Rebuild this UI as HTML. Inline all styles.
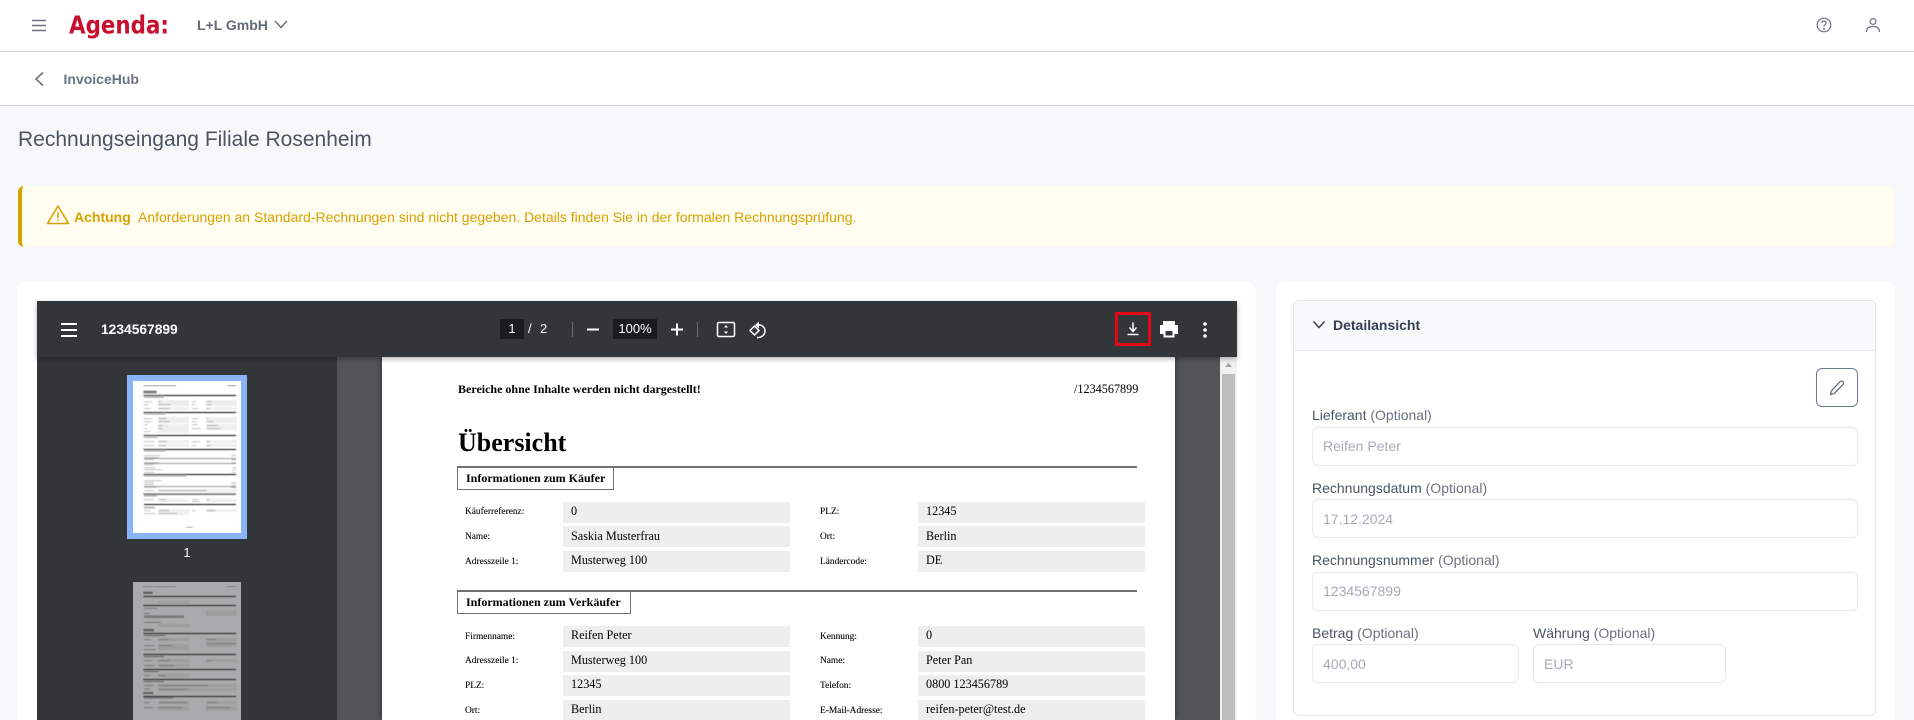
<!DOCTYPE html>
<html lang="de"><head><meta charset="utf-8"><title>InvoiceHub</title>
<style>
html,body{margin:0;padding:0;width:1914px;height:720px;overflow:hidden;background:#f7f8fa}
body{position:relative;font-family:"Liberation Sans",sans-serif}
.a{position:absolute;box-sizing:border-box}
.t{position:absolute;white-space:nowrap;line-height:20px;height:20px}
.s{font-family:"Liberation Serif",serif;color:#000;line-height:14px;height:14px}
.l{font-size:9.4px;margin-top:1px;-webkit-text-stroke:.1px #000}
.v{font-size:12.2px}
.f{position:absolute;background:#eee;width:227px}
.lab{font-size:14px;color:#4b5563}
.lab span{color:#6b7280}
.inp{position:absolute;border:1px solid #e5e7eb;border-radius:6px;background:#fff;box-sizing:border-box;height:39px}
.ph{font-size:14px;color:#a6abb3}
</style></head><body>

<!-- top bars -->
<div class="a" style="left:0;top:0;width:1914px;height:52px;background:#fff;border-bottom:1px solid #d4d6da"></div>
<div class="a" style="left:0;top:52px;width:1914px;height:54px;background:#fff;border-bottom:1px solid #d2d3da"></div>
<svg class="a" style="left:0;top:0" width="320" height="106" viewBox="0 0 320 106" fill="none">
<path d="M32 20.5H46M32 25.5H46M32 30.5H46" stroke="#6b7280" stroke-width="1.5"/>
<text x="69" y="33.500" font-family="DejaVu Sans" font-weight="700" font-size="24.500" fill="#c8102e" textLength="100" lengthAdjust="spacingAndGlyphs">Agenda:</text>
<path d="M275 21L281 27.5L287 21" stroke="#6b7280" stroke-width="1.5"/>
<path d="M43 72.5L36 79L43 85.500" stroke="#6b7280" stroke-width="1.6"/>
</svg>
<div class="t" style="left:197px;top:15px;font-size:14px;font-weight:700;color:#636b77">L+L GmbH</div>
<div class="t" style="left:63.500px;top:69px;font-size:14px;font-weight:700;color:#6b7280">InvoiceHub</div>
<svg class="a" style="left:1810px;top:12px" width="80" height="26" viewBox="0 0 80 26" fill="none" stroke="#6b7280" stroke-width="1.2">
<circle cx="14" cy="13" r="6.800"/>
<path d="M11.800 11C11.800 9.600 12.800 9 14 9C15.300 9 16.200 9.800 16.200 10.900C16.200 12.600 14 12.600 14 14.500"/>
<circle cx="14" cy="16.800" r=".5"/>
<circle cx="63" cy="9.500" r="2.900"/>
<path d="M56.500 20C56.500 16 59 14.500 63 14.500C67 14.500 69.500 16 69.500 20"/>
</svg>

<!-- title -->
<div class="t" style="left:18px;top:130px;font-size:21px;color:#4b5560">Rechnungseingang Filiale Rosenheim</div>

<!-- alert -->
<div class="a" style="left:18px;top:186px;width:1876px;height:61px;background:#fffdf0;border-left:4px solid #d6a100;border-radius:6px"></div>
<svg class="a" style="left:46px;top:204px" width="24" height="22" viewBox="0 0 24 22" fill="none" stroke="#d6a100" stroke-width="1.500">
<path d="M12 2L22.500 19.500H1.500Z" stroke-linejoin="round"/>
<path d="M12 8V14M12 15.500V17"/>
</svg>
<div class="t" style="left:74px;top:207px;font-size:14px;font-weight:700;color:#d6a100">Achtung</div>
<div class="t" style="left:138px;top:207px;font-size:14px;color:#d6a100">Anforderungen an Standard-Rechnungen sind nicht gegeben. Details finden Sie in der formalen Rechnungsprüfung.</div>

<!-- left card -->
<div class="a" style="left:18px;top:282px;width:1237px;height:438px;background:#fff;border-radius:8px 8px 0 0"></div>
<!-- viewer -->
<div class="a" style="left:37px;top:301px;width:1200px;height:419px;background:#525659;overflow:hidden"></div>
<div class="a" style="left:37px;top:357px;width:300px;height:363px;background:#323639"></div>
<!-- scrollbar -->
<div class="a" style="left:1220px;top:357px;width:17px;height:363px;background:#f1f1f1"></div>
<div class="a" style="left:1222px;top:374px;width:13px;height:346px;background:#bdbdbd"></div>
<svg class="a" style="left:1224px;top:362px" width="9" height="6"><path d="M1 5L4.500 1L8 5Z" fill="#a3a3a3"/></svg>

<!-- thumbnails -->
<svg class="a" style="left:0;top:280px" width="400" height="440" viewBox="0 0 1200 1320">
<defs><filter id="b" x="0" y="0" width="1" height="1"><feGaussianBlur stdDeviation="1.500"/></filter></defs>
<rect x="381" y="285" width="360" height="492" fill="#8ab4f8"/>
<rect x="399" y="303" width="324" height="456" fill="#fff"/>
<g filter="url(#b)">
<g fill="#8a8a8a">
<rect x="430" y="315" width="98" height="3"/><rect x="682" y="315" width="26" height="3"/>
<rect x="430" y="332" width="40" height="8" fill="#777"/>
<rect x="432" y="348" width="60" height="6" fill="#bbb"/>
<rect x="432" y="399" width="64" height="5" fill="#bbb"/>
<rect x="432" y="469" width="40" height="5" fill="#bbb"/>
<rect x="432" y="510" width="64" height="5" fill="#bbb"/>
<rect x="432" y="585" width="128" height="5" fill="#bbb"/>
<rect x="432" y="645" width="40" height="5" fill="#bbb"/>
<rect x="432" y="680" width="32" height="5" fill="#aaa"/>
</g>
<g fill="#eee">
<rect x="474" y="360" width="93" height="18"/><rect x="474" y="381" width="93" height="9"/>
<rect x="474" y="411" width="93" height="18"/><rect x="474" y="432" width="93" height="27"/>
<rect x="474" y="480" width="93" height="9"/><rect x="474" y="492" width="93" height="9"/>
<rect x="474" y="657" width="93" height="9"/><rect x="474" y="687" width="93" height="18"/>
<rect x="618" y="360" width="93" height="18"/><rect x="618" y="381" width="93" height="9"/>
<rect x="618" y="411" width="93" height="18"/><rect x="618" y="432" width="93" height="18"/>
<rect x="618" y="480" width="93" height="9"/><rect x="618" y="492" width="93" height="9"/>
<rect x="618" y="657" width="93" height="9"/><rect x="618" y="687" width="93" height="9"/>
<rect x="474" y="627" width="237" height="9"/>
</g>
<g fill="#a5a5a5">
<rect x="432" y="364" width="24" height="2"/><rect x="432" y="373" width="14" height="2"/><rect x="432" y="385" width="22" height="2"/>
<rect x="432" y="415" width="26" height="2"/><rect x="432" y="424" width="22" height="2"/><rect x="432" y="433" width="12" height="2"/><rect x="432" y="445" width="10" height="2"/><rect x="432" y="454" width="20" height="2"/>
<rect x="432" y="484" width="30" height="2"/><rect x="432" y="496" width="30" height="2"/>
<rect x="432" y="526" width="48" height="2"/><rect x="432" y="532" width="44" height="2"/><rect x="432" y="538" width="30" height="2"/>
<rect x="432" y="547" width="44" height="2"/><rect x="432" y="553" width="30" height="2"/>
<rect x="432" y="562" width="34" height="2"/><rect x="432" y="568" width="54" height="2"/><rect x="432" y="577" width="32" height="2"/>
<rect x="432" y="601" width="54" height="2"/><rect x="432" y="607" width="30" height="2"/><rect x="432" y="613" width="30" height="2"/><rect x="432" y="621" width="38" height="2"/>
<rect x="432" y="631" width="30" height="2"/><rect x="432" y="658" width="30" height="2"/><rect x="432" y="691" width="20" height="2"/><rect x="432" y="700" width="34" height="2"/>
<rect x="576" y="364" width="12" height="2"/><rect x="576" y="373" width="10" height="2"/><rect x="576" y="385" width="20" height="2"/>
<rect x="576" y="415" width="18" height="2"/><rect x="576" y="424" width="14" height="2"/><rect x="576" y="433" width="16" height="2"/><rect x="576" y="445" width="26" height="2"/>
<rect x="576" y="484" width="24" height="2"/><rect x="576" y="496" width="14" height="2"/><rect x="576" y="658" width="20" height="2"/><rect x="576" y="664" width="24" height="2"/><rect x="576" y="691" width="10" height="2"/>
<rect x="476" y="364" width="6" height="2" fill="#888"/><rect x="476" y="373" width="36" height="2" fill="#888"/><rect x="476" y="385" width="32" height="2" fill="#888"/>
<rect x="476" y="415" width="24" height="2" fill="#888"/><rect x="476" y="424" width="32" height="2" fill="#888"/><rect x="476" y="436" width="12" height="2" fill="#888"/><rect x="476" y="445" width="12" height="2" fill="#888"/>
<rect x="476" y="484" width="24" height="2" fill="#888"/><rect x="476" y="496" width="22" height="2" fill="#888"/><rect x="476" y="631" width="145" height="2" fill="#888"/>
<rect x="476" y="658" width="22" height="2" fill="#888"/><rect x="476" y="691" width="32" height="2" fill="#888"/><rect x="476" y="700" width="56" height="2" fill="#888"/>
<rect x="620" y="364" width="14" height="2" fill="#888"/><rect x="620" y="373" width="14" height="2" fill="#888"/><rect x="620" y="385" width="8" height="2" fill="#888"/>
<rect x="620" y="415" width="5" height="2" fill="#888"/><rect x="620" y="424" width="20" height="2" fill="#888"/><rect x="620" y="436" width="34" height="2" fill="#888"/><rect x="620" y="445" width="42" height="2" fill="#888"/>
<rect x="620" y="484" width="10" height="2" fill="#888"/><rect x="620" y="496" width="12" height="2" fill="#888"/><rect x="620" y="658" width="8" height="2" fill="#888"/><rect x="620" y="691" width="26" height="2" fill="#888"/>
<rect x="694" y="526" width="14" height="2"/><rect x="694" y="538" width="14" height="2" fill="#777"/><rect x="694" y="547" width="14" height="2"/>
<rect x="698" y="562" width="10" height="2"/><rect x="698" y="568" width="10" height="2"/><rect x="694" y="577" width="14" height="2"/>
<rect x="694" y="607" width="14" height="2"/><rect x="694" y="613" width="14" height="2"/><rect x="694" y="621" width="14" height="2" fill="#777"/>
<rect x="558" y="741" width="20" height="3"/>
</g>
<g fill="#000">
<rect x="430" y="345" width="278" height="3"/><rect x="430" y="396" width="278" height="3"/>
<rect x="430" y="465" width="278" height="3"/><rect x="430" y="507" width="278" height="3"/>
<rect x="430" y="582" width="278" height="3"/><rect x="432" y="672" width="276" height="3"/>
</g>
<g fill="#999">
<rect x="432" y="534" width="276" height="3"/><rect x="432" y="549" width="276" height="3"/><rect x="432" y="618" width="276" height="3"/>
</g>
<rect x="430" y="640" width="278" height="5" fill="#777"/>
</g>

<rect x="399" y="906" width="324" height="414" fill="#a9aaab"/>
<g filter="url(#b)">
<g fill="#1c1c1c">
<rect x="430" y="948" width="278" height="3"/><rect x="430" y="975" width="278" height="3"/>
<rect x="430" y="1059" width="278" height="3"/><rect x="430" y="1122" width="278" height="3"/>
<rect x="430" y="1167" width="278" height="3"/><rect x="430" y="1197" width="278" height="3"/><rect x="430" y="1248" width="278" height="3"/>
</g>
<g fill="#9c9d9e">
<rect x="474" y="963" width="93" height="9"/><rect x="618" y="990" width="93" height="18"/><rect x="474" y="1032" width="93" height="9"/>
<rect x="474" y="1074" width="93" height="9"/><rect x="474" y="1092" width="93" height="18"/><rect x="618" y="1074" width="93" height="9"/><rect x="618" y="1086" width="93" height="15"/>
<rect x="474" y="1137" width="93" height="9"/><rect x="474" y="1152" width="93" height="9"/><rect x="618" y="1137" width="93" height="9"/>
<rect x="474" y="1182" width="93" height="9"/><rect x="474" y="1212" width="237" height="9"/><rect x="474" y="1224" width="237" height="9"/>
<rect x="474" y="1263" width="93" height="9"/><rect x="474" y="1278" width="93" height="15"/><rect x="618" y="1263" width="93" height="9"/><rect x="618" y="1278" width="93" height="15"/>
</g>
<g fill="#5e5f60">
<rect x="430" y="918" width="98" height="2"/><rect x="682" y="918" width="26" height="2"/><rect x="430" y="935" width="28" height="7"/>
<rect x="432" y="1006" width="120" height="8" fill="#777"/><rect x="430" y="1047" width="32" height="7"/>
<rect x="432" y="984" width="40" height="2"/><rect x="432" y="999" width="18" height="2"/><rect x="432" y="1026" width="50" height="2"/>
<rect x="432" y="1065" width="64" height="3"/><rect x="432" y="1128" width="60" height="3"/><rect x="432" y="1173" width="44" height="3"/><rect x="432" y="1203" width="60" height="3"/><rect x="430" y="1236" width="30" height="6"/><rect x="432" y="1252" width="88" height="3"/>
<rect x="476" y="1078" width="30" height="2"/><rect x="476" y="1096" width="40" height="2"/><rect x="476" y="1141" width="32" height="2"/><rect x="476" y="1156" width="48" height="2"/><rect x="476" y="1186" width="20" height="2"/>
<rect x="476" y="1216" width="148" height="2"/><rect x="476" y="1227" width="86" height="2"/><rect x="476" y="1267" width="84" height="2"/><rect x="476" y="1282" width="70" height="2"/>
<rect x="620" y="1078" width="26" height="2"/><rect x="620" y="1090" width="86" height="2"/><rect x="620" y="1141" width="14" height="2"/><rect x="620" y="1267" width="30" height="2"/><rect x="620" y="1282" width="70" height="2"/>
<rect x="432" y="1078" width="22" height="2"/><rect x="432" y="1096" width="30" height="2"/><rect x="432" y="1108" width="34" height="2"/><rect x="432" y="1141" width="24" height="2"/><rect x="432" y="1156" width="30" height="2"/><rect x="432" y="1186" width="20" height="2"/><rect x="432" y="1216" width="30" height="2"/><rect x="432" y="1226" width="20" height="2"/><rect x="432" y="1267" width="16" height="2"/><rect x="432" y="1282" width="28" height="2"/>
</g>
</g>
</svg>
<div class="t" style="left:182px;top:543px;width:10px;text-align:center;font-size:13px;color:#fff">1</div>

<!-- pdf page -->
<div class="a" style="left:382px;top:340px;width:793px;height:380px;background:#fff;box-shadow:0 0 6px rgba(0,0,0,.45);overflow:hidden"></div>
<div class="t s" style="left:458px;top:382px;font-size:12px;font-weight:700">Bereiche ohne Inhalte werden nicht dargestellt!</div>
<div class="t s" style="left:1074px;top:382px;font-size:12.2px">/1234567899</div>
<div class="t" style="left:458px;top:428px;height:30px;line-height:30px;font-family:'Liberation Serif',serif;font-size:26px;font-weight:700;color:#000">Übersicht</div>

<div class="a" style="left:458px;top:466px;width:679px;height:2px;background:#707070"></div>
<div class="a" style="left:457px;top:466px;width:157px;height:24px;border:1px solid #707070;border-top-width:2px;background:#fff"></div>
<div class="t s" style="left:466px;top:471px;font-size:12px;font-weight:700">Informationen zum Käufer</div>
<div class="f" style="left:563px;top:502px;height:21px"></div><div class="f" style="left:563px;top:526px;height:21px"></div><div class="f" style="left:563px;top:551px;height:21px"></div>
<div class="f" style="left:918px;top:502px;height:21px"></div><div class="f" style="left:918px;top:526px;height:21px"></div><div class="f" style="left:918px;top:551px;height:21px"></div>
<div class="t s l" style="left:465px;top:504px">Käuferreferenz:</div><div class="t s l" style="left:465px;top:529px">Name:</div><div class="t s l" style="left:465px;top:554px">Adresszeile 1:</div>
<div class="t s l" style="left:820px;top:504px">PLZ:</div><div class="t s l" style="left:820px;top:529px">Ort:</div><div class="t s l" style="left:820px;top:554px">Ländercode:</div>
<div class="t s v" style="left:571px;top:504px">0</div><div class="t s v" style="left:571px;top:529px">Saskia Musterfrau</div><div class="t s v" style="left:571px;top:553px">Musterweg 100</div>
<div class="t s v" style="left:926px;top:504px">12345</div><div class="t s v" style="left:926px;top:529px">Berlin</div><div class="t s v" style="left:926px;top:553px">DE</div>

<div class="a" style="left:458px;top:590px;width:679px;height:2px;background:#707070"></div>
<div class="a" style="left:457px;top:590px;width:174px;height:24px;border:1px solid #707070;border-top-width:2px;background:#fff"></div>
<div class="t s" style="left:466px;top:595px;font-size:12px;font-weight:700">Informationen zum Verkäufer</div>
<div class="f" style="left:563px;top:626px;height:21px"></div><div class="f" style="left:563px;top:651px;height:21px"></div><div class="f" style="left:563px;top:675px;height:21px"></div><div class="f" style="left:563px;top:700px;height:20px"></div>
<div class="f" style="left:918px;top:626px;height:21px"></div><div class="f" style="left:918px;top:651px;height:21px"></div><div class="f" style="left:918px;top:675px;height:21px"></div><div class="f" style="left:918px;top:700px;height:20px"></div>
<div class="t s l" style="left:465px;top:629px">Firmenname:</div><div class="t s l" style="left:465px;top:653px">Adresszeile 1:</div><div class="t s l" style="left:465px;top:678px">PLZ:</div><div class="t s l" style="left:465px;top:703px">Ort:</div>
<div class="t s l" style="left:820px;top:629px">Kennung:</div><div class="t s l" style="left:820px;top:653px">Name:</div><div class="t s l" style="left:820px;top:678px">Telefon:</div><div class="t s l" style="left:820px;top:703px">E-Mail-Adresse:</div>
<div class="t s v" style="left:571px;top:628px">Reifen Peter</div><div class="t s v" style="left:571px;top:653px">Musterweg 100</div><div class="t s v" style="left:571px;top:677px">12345</div><div class="t s v" style="left:571px;top:702px">Berlin</div>
<div class="t s v" style="left:926px;top:628px">0</div><div class="t s v" style="left:926px;top:653px">Peter Pan</div><div class="t s v" style="left:926px;top:677px">0800 123456789</div><div class="t s v" style="left:926px;top:702px">reifen-peter@test.de</div>

<!-- toolbar -->
<div class="a" style="left:37px;top:301px;width:1200px;height:56px;background:#323639;box-shadow:0 2px 5px rgba(0,0,0,.3)"></div>
<svg class="a" style="left:37px;top:301px" width="1200" height="57" viewBox="37 301 1200 57" fill="none">
<path d="M61 324H77M61 330H77M61 336H77" stroke="#fff" stroke-width="2"/>
<rect x="500" y="319" width="24" height="20" fill="#191b1c"/>
<rect x="613" y="319" width="44" height="20" fill="#191b1c"/>
<path d="M572.500 322V337M697.500 322V337" stroke="#6a6d70" stroke-width="1"/>
<path d="M587 329.500H599M671 329.500H683M677 323.500V335.500" stroke="#fff" stroke-width="2"/>
<rect x="717.500" y="322.500" width="17" height="14" rx="1.500" stroke="#fff" stroke-width="1.500"/>
<path d="M726 325L724 327.500H728ZM726 334L724 331.500H728Z" fill="#fff"/>
<path d="M750 330.500L754.500 326L759 330.500L754.500 335Z" stroke="#fff" stroke-width="1.500"/>
<path d="M756 325C760 324 765 326 765 331C765 335 761 338 757 337.500" stroke="#fff" stroke-width="1.500"/>
<path d="M759 321.500L755 325L759 328.500Z" fill="#fff"/>
<path d="M1133 322.500V331M1129.500 327.500L1133 331.500L1136.500 327.500M1127.500 334.500H1138.500" stroke="#fff" stroke-width="1.500"/>
<rect x="1116.500" y="313.500" width="33" height="31" stroke="#e30613" stroke-width="3"/>
<path d="M1163 321H1175V325H1178V334H1174.500V337.500H1163.500V334H1160V325H1163Z" fill="#fff"/>
<rect x="1165.500" y="331" width="7" height="4.500" fill="#323639"/>
<circle cx="1205" cy="324" r="1.800" fill="#fff"/><circle cx="1205" cy="330" r="1.800" fill="#fff"/><circle cx="1205" cy="336" r="1.800" fill="#fff"/>
</svg>
<div class="t" style="left:101px;top:320px;font-size:13.8px;font-weight:700;color:#fff">1234567899</div>
<div class="t" style="left:500px;top:319px;width:24px;text-align:center;font-size:13px;color:#fff">1</div>
<div class="t" style="left:528px;top:319px;font-size:13px;color:#fff">/</div>
<div class="t" style="left:540px;top:319px;font-size:13px;color:#fff">2</div>
<div class="t" style="left:613px;top:319px;width:44px;text-align:center;font-size:13px;color:#fff">100%</div>

<!-- right card -->
<div class="a" style="left:1276px;top:282px;width:618px;height:438px;background:#fff;border-radius:8px 8px 0 0"></div>
<div class="a" style="left:1293px;top:300px;width:583px;height:416px;background:#fff;border:1px solid #e5e7eb;border-radius:6px"></div>
<div class="a" style="left:1293px;top:300px;width:583px;height:51px;background:#f8f9fb;border:1px solid #e5e7eb;border-radius:6px 6px 0 0"></div>
<svg class="a" style="left:1310px;top:318px" width="18" height="14" fill="none"><path d="M3.500 3.500L9 9.500L14.500 3.500" stroke="#374151" stroke-width="1.500"/></svg>
<div class="t" style="left:1333px;top:315px;font-size:14px;font-weight:700;color:#374151">Detailansicht</div>
<div class="a" style="left:1816px;top:368px;width:42px;height:39px;border:1px solid #6b7a90;border-radius:6px;background:#fff"></div>
<svg class="a" style="left:1827px;top:378px" width="20" height="20" viewBox="0 0 20 20" fill="none" stroke="#5b6878" stroke-width="1.200" stroke-linejoin="round">
<path d="M3.500 16.500L4.300 13L13 3.700C13.800 2.900 15.100 2.900 16 3.700C16.800 4.500 16.800 5.800 16 6.600L7 15.700Z"/>
</svg>

<div class="t lab" style="left:1312px;top:405px">Lieferant <span>(Optional)</span></div>
<div class="inp" style="left:1312px;top:427px;width:546px"></div>
<div class="t ph" style="left:1323px;top:436px">Reifen Peter</div>
<div class="t lab" style="left:1312px;top:478px">Rechnungsdatum <span>(Optional)</span></div>
<div class="inp" style="left:1312px;top:499px;width:546px"></div>
<div class="t ph" style="left:1323px;top:509px">17.12.2024</div>
<div class="t lab" style="left:1312px;top:550px">Rechnungsnummer <span>(Optional)</span></div>
<div class="inp" style="left:1312px;top:572px;width:546px"></div>
<div class="t ph" style="left:1323px;top:581px">1234567899</div>
<div class="t lab" style="left:1312px;top:623px">Betrag <span>(Optional)</span></div>
<div class="inp" style="left:1312px;top:644px;width:207px"></div>
<div class="t ph" style="left:1323px;top:654px">400,00</div>
<div class="t lab" style="left:1533px;top:623px">Währung <span>(Optional)</span></div>
<div class="inp" style="left:1533px;top:644px;width:193px"></div>
<div class="t ph" style="left:1544px;top:654px">EUR</div>
</body></html>
